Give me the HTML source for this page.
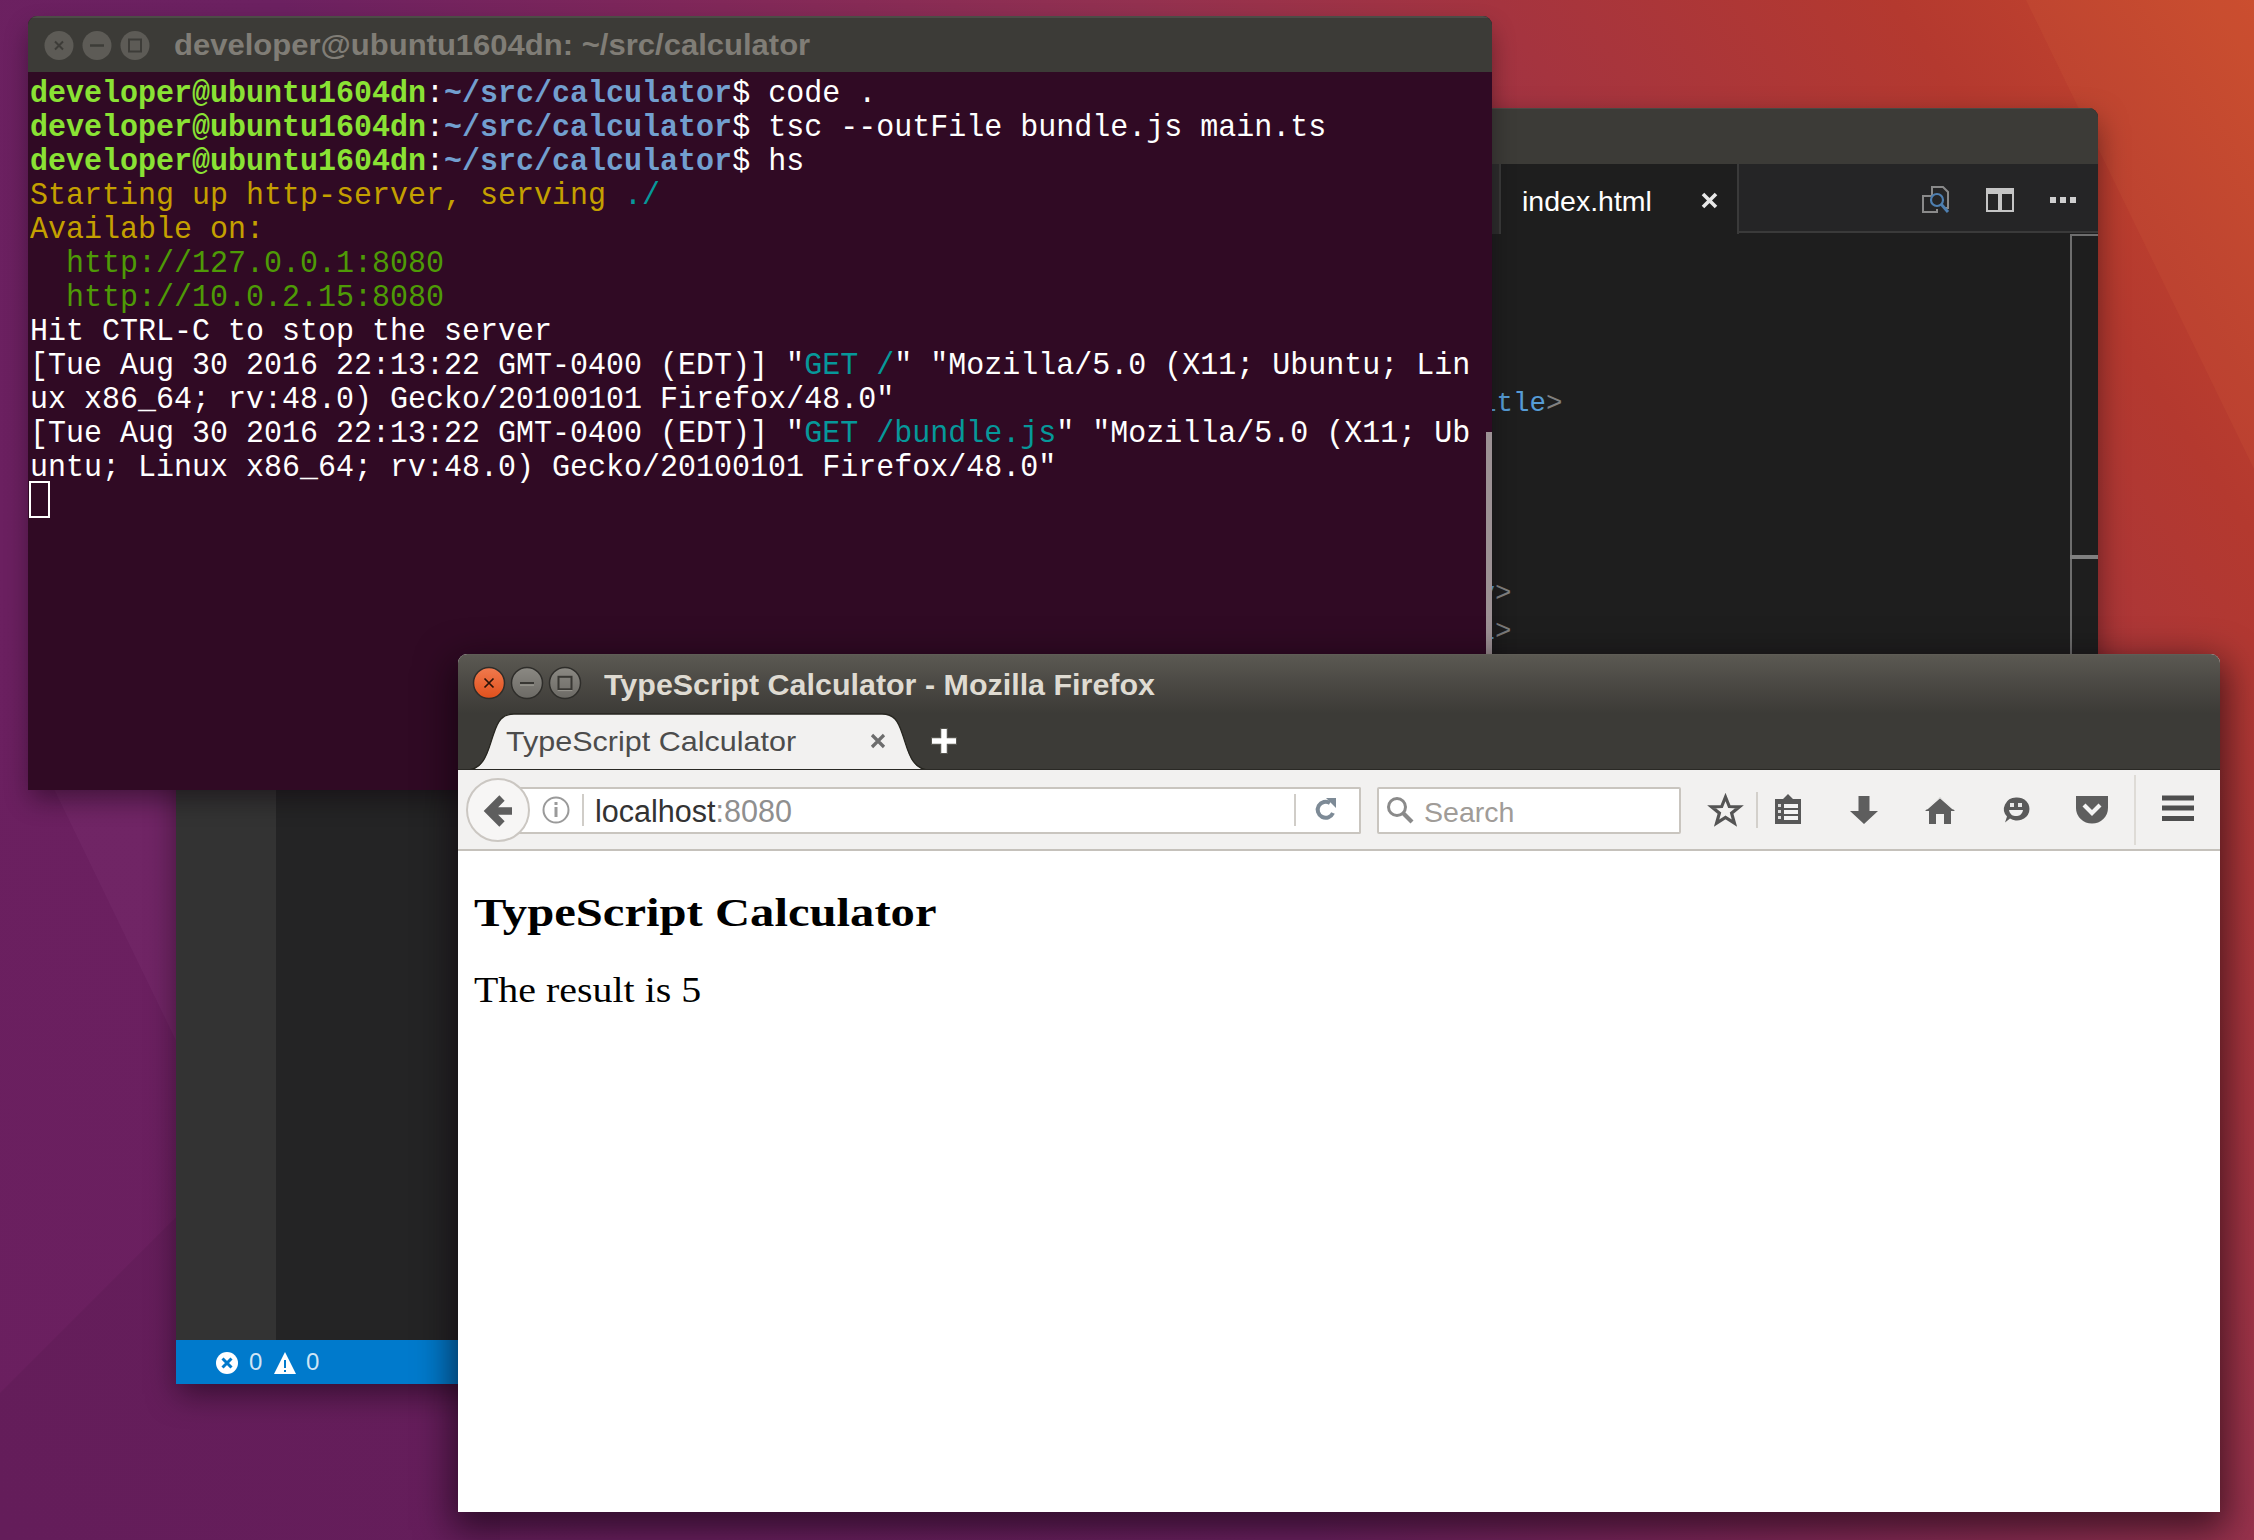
<!DOCTYPE html>
<html><head><meta charset="utf-8">
<style>
*{margin:0;padding:0;box-sizing:border-box}
html,body{width:2254px;height:1540px;overflow:hidden}
body{position:relative;font-family:"Liberation Sans",sans-serif;
background:linear-gradient(56deg,#6a1f5f 0%,#6c2161 40%,#7f275a 52%,#933150 66%,#a5343f 77%,#b4392f 89%,#c7492d 100%);}
.abs{position:absolute}
svg{position:absolute;overflow:visible}
/* terminal */
#term{left:28px;top:16px;width:1464px;height:774px;background:#300a24;border-radius:9px 9px 0 0;overflow:hidden;box-shadow:0 12px 26px -3px rgba(10,0,8,.45)}
#term .tb{left:0;top:0;width:1464px;height:56px;background:#3c3b37;border-top:2px solid #4d4c47}
#term pre{position:absolute;left:2px;top:61px;font-family:"Liberation Mono",monospace;font-size:31.5px;line-height:34px;color:#ffffff;white-space:pre;transform-origin:0 0;transform:scaleX(0.95238)}
.g{color:#8ae234;font-weight:bold}.b{color:#729fcf;font-weight:bold}.y{color:#c4a000}.c{color:#06989a}.dg{color:#4e9a06}
/* vscode */
#code{left:176px;top:108px;width:1922px;height:1276px;background:#1e1e1e;border-radius:9px 9px 0 0;overflow:hidden;box-shadow:0 12px 30px -2px rgba(10,0,8,.5)}
/* firefox */
#ff{left:458px;top:654px;width:1762px;height:858px;background:#fff;border-radius:9px 9px 0 0;overflow:hidden;box-shadow:0 12px 36px 6px rgba(10,0,8,.6)}
.ui{font-family:"Liberation Sans",sans-serif;white-space:nowrap}
</style></head>
<body>
<!-- wallpaper streaks -->
<div class="abs" style="left:0;top:0;width:2254px;height:1540px;background:rgba(255,150,90,.07);clip-path:polygon(2026px 0,2254px 0,2254px 469px)"></div>
<div class="abs" style="left:0;top:0;width:2254px;height:1540px;background:rgba(255,200,255,.035);clip-path:polygon(40px 760px,200px 760px,200px 1090px)"></div>
<div class="abs" style="left:0;top:0;width:2254px;height:1540px;background:rgba(20,0,20,.06);clip-path:polygon(0 1393px,500px 893px,500px 1540px,0 1540px)"></div>
<!-- ================= VS CODE ================= -->
<div id="code" class="abs">
  <div class="abs" style="left:0;top:0;width:1922px;height:56px;background:#3c3b37;border-top:1px solid #4a4944"></div>
  <div class="abs" style="left:0;top:56px;width:1922px;height:69px;background:#252526;border-bottom:2px solid #3a3a3a"></div>
  <!-- inactive tab sliver -->
  <div class="abs" style="left:1300px;top:56px;width:25px;height:70px;background:#2d2d2d;border-right:2px solid #3a3a3a"></div>
  <!-- active tab -->
  <div class="abs" style="left:1325px;top:56px;width:238px;height:70px;background:#1e1e1e;border-right:2px solid #3a3a3a"></div>
  <div class="abs ui" id="codetab" style="left:1346px;top:76px;font-size:28.5px;line-height:34px;transform-origin:0 0;transform:scaleX(1.0);color:#ffffff">index.html</div>
  <svg style="left:1525px;top:84px" width="17" height="17"><path d="M2 2L15 15M15 2L2 15" stroke="#e8e8e8" stroke-width="3.6"/></svg>
  <!-- right icons -->
  <svg style="left:1746px;top:78px" width="28" height="28" viewBox="0 0 28 28">
    <path d="M10 10V1H21L26 6V22H22" fill="none" stroke="#8a8a8a" stroke-width="2"/>
    <path d="M9 10H1V26H15V23" fill="none" stroke="#8a8a8a" stroke-width="2"/>
    <circle cx="15" cy="14" r="6" fill="none" stroke="#4e7fb0" stroke-width="2.2"/>
    <path d="M19 18L26 26" stroke="#4e7fb0" stroke-width="3"/>
  </svg>
  <svg style="left:1810px;top:80px" width="28" height="24" viewBox="0 0 28 24">
    <rect x="0" y="0" width="28" height="24" fill="#c5c5c5"/>
    <rect x="2" y="6" width="10" height="16" fill="#252526"/>
    <rect x="16" y="6" width="10" height="16" fill="#252526"/>
  </svg>
  <svg style="left:1874px;top:88px" width="28" height="8" viewBox="0 0 28 8">
    <rect x="0" y="1" width="6" height="6" fill="#d0d0d0"/><rect x="10" y="1" width="6" height="6" fill="#d0d0d0"/><rect x="20" y="1" width="6" height="6" fill="#d0d0d0"/>
  </svg>
  <!-- overview ruler -->
  <div class="abs" style="left:1894px;top:126px;width:2px;height:1106px;background:#6e6e6e"></div>
  <div class="abs" style="left:1894px;top:126px;width:28px;height:2px;background:#6e6e6e"></div>
  <div class="abs" style="left:1894px;top:447px;width:28px;height:4px;background:#808080"></div>
  <!-- code fragments -->
  <div class="abs" style="left:1304px;top:277px;font-family:'Liberation Mono',monospace;font-size:27.5px;line-height:38px;color:#808080;white-space:pre"><span style="color:#569cd6">itle</span>&gt;</div>
  <div class="abs" style="left:1302.5px;top:467px;font-family:'Liberation Mono',monospace;font-size:27.5px;line-height:38px;color:#808080;white-space:pre"><span style="color:#569cd6">v</span>&gt;
<span style="color:#569cd6">l</span>&gt;</div>
  <!-- activity bar & status bar -->
  <div class="abs" style="left:100px;top:126px;width:500px;height:1106px;background:#242425"></div>
  <div class="abs" style="left:0;top:126px;width:100px;height:1106px;background:#333333"></div>
  <div class="abs" style="left:0;top:1232px;width:1922px;height:44px;background:#007acc"></div>
  <svg style="left:40px;top:1244px" width="22" height="22" viewBox="0 0 22 22">
    <circle cx="11" cy="11" r="11" fill="#fff"/>
    <path d="M6.5 6.5L15.5 15.5M15.5 6.5L6.5 15.5" stroke="#007acc" stroke-width="3"/>
  </svg>
  <div class="abs ui" style="left:73px;top:1240px;font-size:24px;line-height:28px;color:rgba(255,255,255,.82)">0</div>
  <svg style="left:98px;top:1244px" width="22" height="22" viewBox="0 0 22 22">
    <path d="M11 0L22 22H0Z" fill="#fff"/>
    <path d="M11 8V16M11 18V20" stroke="#007acc" stroke-width="2"/>
  </svg>
  <div class="abs ui" style="left:130px;top:1240px;font-size:24px;line-height:28px;color:rgba(255,255,255,.82)">0</div>
</div>

<!-- ================= TERMINAL ================= -->
<div id="term" class="abs">
  <div class="abs tb"></div>
  <svg style="left:16px;top:15px" width="120" height="30" viewBox="0 0 120 30">
    <circle cx="15" cy="14.5" r="14.5" fill="#5d5b56"/>
    <path d="M11 10.5L19 18.5M19 10.5L11 18.5" stroke="#3d3c38" stroke-width="2"/>
    <circle cx="53" cy="14.5" r="14.5" fill="#5d5b56"/>
    <path d="M46 14.5H60" stroke="#3d3c38" stroke-width="2.5"/>
    <circle cx="91" cy="14.5" r="14.5" fill="#5d5b56"/>
    <rect x="85" y="8.5" width="12" height="12" fill="none" stroke="#3d3c38" stroke-width="2"/>
  </svg>
  <div class="abs ui" id="termtitle" style="left:146px;top:13px;font-size:30px;line-height:32px;transform-origin:0 0;transform:scaleX(1.034);font-weight:bold;color:#807d76">developer@ubuntu1604dn: ~/src/calculator</div>
<pre><span class="g">developer@ubuntu1604dn</span>:<span class="b">~/src/calculator</span>$ code .
<span class="g">developer@ubuntu1604dn</span>:<span class="b">~/src/calculator</span>$ tsc --outFile bundle.js main.ts
<span class="g">developer@ubuntu1604dn</span>:<span class="b">~/src/calculator</span>$ hs
<span class="y">Starting up http-server, serving </span><span class="c">./</span>
<span class="y">Available on:</span>
  <span class="dg">http://127.0.0.1:8080</span>
  <span class="dg">http://10.0.2.15:8080</span>
Hit CTRL-C to stop the server
[Tue Aug 30 2016 22:13:22 GMT-0400 (EDT)] "<span class="c">GET /</span>" "Mozilla/5.0 (X11; Ubuntu; Lin
ux x86_64; rv:48.0) Gecko/20100101 Firefox/48.0"
[Tue Aug 30 2016 22:13:22 GMT-0400 (EDT)] "<span class="c">GET /bundle.js</span>" "Mozilla/5.0 (X11; Ub
untu; Linux x86_64; rv:48.0) Gecko/20100101 Firefox/48.0"
</pre>
  <div class="abs" style="left:1px;top:465px;width:21px;height:37px;border:2px solid #fff"></div>
  <div class="abs" style="left:1458px;top:416px;width:6px;height:358px;background:#9d9195"></div>
</div>

<!-- ================= FIREFOX ================= -->
<div id="ff" class="abs">
<div class="abs" style="left:0;top:0;width:1762px;height:2px;background:#5f5d56"></div>
<div class="abs" style="left:0;top:1px;width:1762px;height:857px">
  <div class="abs" style="left:0;top:0;width:1762px;height:115px;background:linear-gradient(#5b5952 0px,#4a4843 30px,#3c3b37 58px,#3c3b37 115px)"></div>
  <!-- window buttons -->
  <svg style="left:14px;top:12px" width="120" height="34" viewBox="0 0 120 34">
    <defs>
      <linearGradient id="gc" x1="0" y1="0" x2="0" y2="1"><stop offset="0" stop-color="#f07a4e"/><stop offset="1" stop-color="#e0501c"/></linearGradient>
      <linearGradient id="gg" x1="0" y1="0" x2="0" y2="1"><stop offset="0" stop-color="#8b8983"/><stop offset="1" stop-color="#6c6a65"/></linearGradient>
    </defs>
    <circle cx="17" cy="16" r="15.5" fill="url(#gc)" stroke="#2e2d2a" stroke-width="1.5"/>
    <path d="M12.5 11.5L21.5 20.5M21.5 11.5L12.5 20.5" stroke="#2a1208" stroke-width="1.7"/>
    <circle cx="55" cy="16" r="15.5" fill="url(#gg)" stroke="#2e2d2a" stroke-width="1.5"/>
    <path d="M48 16H62" stroke="#383733" stroke-width="2.2"/><path d="M48 18.2H62" stroke="#9a9891" stroke-width="1.2"/>
    <circle cx="93" cy="16" r="15.5" fill="url(#gg)" stroke="#2e2d2a" stroke-width="1.5"/>
    <rect x="86.5" y="9.8" width="13" height="12.5" fill="none" stroke="#383733" stroke-width="2"/><path d="M85.5 23.6H100.5" stroke="#9a9891" stroke-width="1"/>
  </svg>
  <div class="abs ui" id="fftitle" style="left:146px;top:14px;font-size:29px;line-height:32px;transform-origin:0 0;transform:scaleX(1.05);font-weight:bold;color:#dfdbd2">TypeScript Calculator - Mozilla Firefox</div>
  <!-- tab -->
  <svg style="left:0;top:58px" width="480" height="58" viewBox="0 0 480 58">
    <path d="M6 58C28 58 30 36 36 20C40 8 44 1 56 1H424C436 1 440 8 444 20C450 36 452 58 474 58Z" fill="#f2f1f0"/><path d="M6 57.5C28 57.5 30 36 36 20C40 8 44 1 56 1H424C436 1 440 8 444 20C450 36 452 57.5 474 57.5" fill="none" stroke="#26251f" stroke-width="1.3"/>
  </svg>
  <div class="abs ui" id="fftab" style="left:48px;top:71px;font-size:28px;line-height:32px;transform-origin:0 0;transform:scaleX(1.09);color:#4c4c4c">TypeScript Calculator</div>
  <svg style="left:412px;top:78px" width="16" height="16" viewBox="0 0 16 16"><path d="M2 2L14 14M14 2L2 14" stroke="#6d6d6d" stroke-width="3.2"/></svg>
  <svg style="left:472px;top:72px" width="28" height="28" viewBox="0 0 28 28"><path d="M14 1V27M1 14H27" stroke="#56554f" stroke-width="8"/><path d="M14 2V26M2 14H26" stroke="#ffffff" stroke-width="5.5"/></svg>
  <div class="abs" style="left:0;top:114px;width:1762px;height:1px;background:#2a2925"></div>
  <!-- nav bar -->
  <div class="abs" style="left:0;top:115px;width:1762px;height:81px;background:#f2f1f0;border-bottom:2px solid #c5c1bb"></div>
  <!-- url bar -->
  <div class="abs" style="left:40px;top:132px;width:863px;height:47px;background:#fff;border:2px solid #c9c5bf;border-left:none;border-radius:0 2px 2px 0"></div>
  <!-- back button -->
  <div class="abs" style="left:8px;top:123px;width:64px;height:64px;border-radius:50%;background:#f7f6f5;border:2px solid #cbc7c2"></div>
  <svg style="left:26px;top:139px" width="30" height="34" viewBox="0 0 30 34"><path d="M28 17H8M18 4L5 17L18 30" fill="none" stroke="#5e5e5e" stroke-width="7.5" stroke-linejoin="miter"/></svg>
  <!-- info -->
  <svg style="left:84px;top:141px" width="28" height="28" viewBox="0 0 28 28"><circle cx="14" cy="14" r="12.5" fill="none" stroke="#9a9a9a" stroke-width="2"/><rect x="12.5" y="6" width="3" height="3" fill="#9a9a9a"/><rect x="12.5" y="11" width="3" height="10" fill="#9a9a9a"/></svg>
  <div class="abs" style="left:124px;top:139px;width:2px;height:32px;background:#d0cdc8"></div>
  <div class="abs ui" id="ffurl" style="left:137px;top:140px;font-size:31px;line-height:34px;transform-origin:0 0;transform:scaleX(0.985);color:#333"><span>localhost</span><span style="color:#8f8f8f">:8080</span></div>
  <div class="abs" style="left:836px;top:139px;width:2px;height:32px;background:#d0cdc8"></div>
  <svg style="left:856px;top:142px" width="24" height="26" viewBox="0 0 24 26"><path d="M19 16A8 8 0 1 1 16 6" fill="none" stroke="#7d8a96" stroke-width="4"/><path d="M12 1H22V11Z" fill="#7d8a96"/></svg>
  <!-- search -->
  <div class="abs" style="left:919px;top:132px;width:304px;height:47px;background:#fff;border:2px solid #c9c5bf;border-radius:2px"></div>
  <svg style="left:928px;top:141px" width="28" height="28" viewBox="0 0 28 28"><circle cx="11" cy="11" r="8.5" fill="none" stroke="#8a8a8a" stroke-width="3"/><path d="M17 17L26 26" stroke="#8a8a8a" stroke-width="4.2"/></svg>
  <div class="abs ui" id="ffsearch" style="left:966px;top:141px;font-size:28px;line-height:34px;transform-origin:0 0;transform:scaleX(1.02);color:#a09c98">Search</div>
  <!-- toolbar icons -->
  <svg style="left:1251px;top:139px" width="33" height="33" viewBox="0 0 33 33"><path d="M16.5 3L20.3 12.5L30.5 12.8L22.6 19.2L25.4 29L16.5 23.3L7.6 29L10.4 19.2L2.5 12.8L12.7 12.5Z" fill="none" stroke="#545454" stroke-width="3.2" stroke-linejoin="miter"/></svg>
  <div class="abs" style="left:1298px;top:137px;width:2px;height:36px;background:#d3d0cb"></div>
  <svg style="left:1316px;top:139px" width="28" height="31" viewBox="0 0 28 31"><path d="M14 0L19 5H27V30H1V5H9Z" fill="#585858"/><rect x="4" y="10" width="3" height="3" fill="#dcdcdc"/><rect x="4" y="16" width="3" height="3" fill="#dcdcdc"/><rect x="4" y="22" width="3" height="3" fill="#dcdcdc"/><rect x="10" y="10" width="14" height="4" fill="#f4f4f4"/><rect x="10" y="16" width="14" height="4" fill="#f4f4f4"/><rect x="10" y="22" width="14" height="4" fill="#f4f4f4"/></svg>
  <svg style="left:1392px;top:141px" width="28" height="28" viewBox="0 0 28 28"><path d="M8.5 0H19.5V15H28L14 28L0 15H8.5Z" fill="#5e5e5e"/></svg>
  <svg style="left:1466px;top:141px" width="32" height="29" viewBox="0 0 32 29"><path d="M16 1L31 15H27V28H20V18H12V28H5V15H1Z" fill="#5e5e5e"/><path d="M3 13L16 1.5L29 13" fill="none" stroke="#f2f1f0" stroke-width="1.2"/></svg>
  <svg style="left:1544px;top:141px" width="28" height="28" viewBox="0 0 28 28"><path d="M14 1.5A12.5 11.5 0 1 1 8 22.5L3 26.5L5 20.5A12.5 11.5 0 0 1 14 1.5Z" fill="#5a5a5a"/><rect x="8" y="7" width="4" height="4" fill="#e8e8e8"/><rect x="16" y="7" width="4" height="4" fill="#e8e8e8"/><path d="M7 14H21C20 19 17 20 14 20C11 20 8 19 7 14Z" fill="#f0f0f0"/></svg>
  <svg style="left:1618px;top:141px" width="32" height="28" viewBox="0 0 32 28"><path d="M0 0H32V12A16 15.5 0 0 1 0 12Z" fill="#5e5e5e"/><path d="M8 9L16 17L24 9" fill="none" stroke="#f4f4f4" stroke-width="4.2"/></svg>
  <div class="abs" style="left:1676px;top:120px;width:2px;height:70px;background:#dedbd6"></div>
  <svg style="left:1704px;top:139px" width="32" height="30" viewBox="0 0 32 30"><rect x="0" y="1.5" width="32" height="5" fill="#4e4e4e"/><rect x="0" y="11.5" width="32" height="5" fill="#4e4e4e"/><rect x="0" y="22" width="32" height="5" fill="#4e4e4e"/></svg>
  <!-- content -->
  <div class="abs" id="ffh3" style="left:16px;top:236px;font-family:'Liberation Serif',serif;font-weight:bold;font-size:40px;line-height:44px;transform-origin:0 0;transform:scaleX(1.216);color:#000;white-space:nowrap">TypeScript Calculator</div>
  <div class="abs" id="ffp" style="left:16px;top:316px;font-family:'Liberation Serif',serif;font-size:35px;line-height:40px;transform-origin:0 0;transform:scaleX(1.14);color:#000;white-space:nowrap">The result is 5</div>
</div>
</div>
</body></html>
